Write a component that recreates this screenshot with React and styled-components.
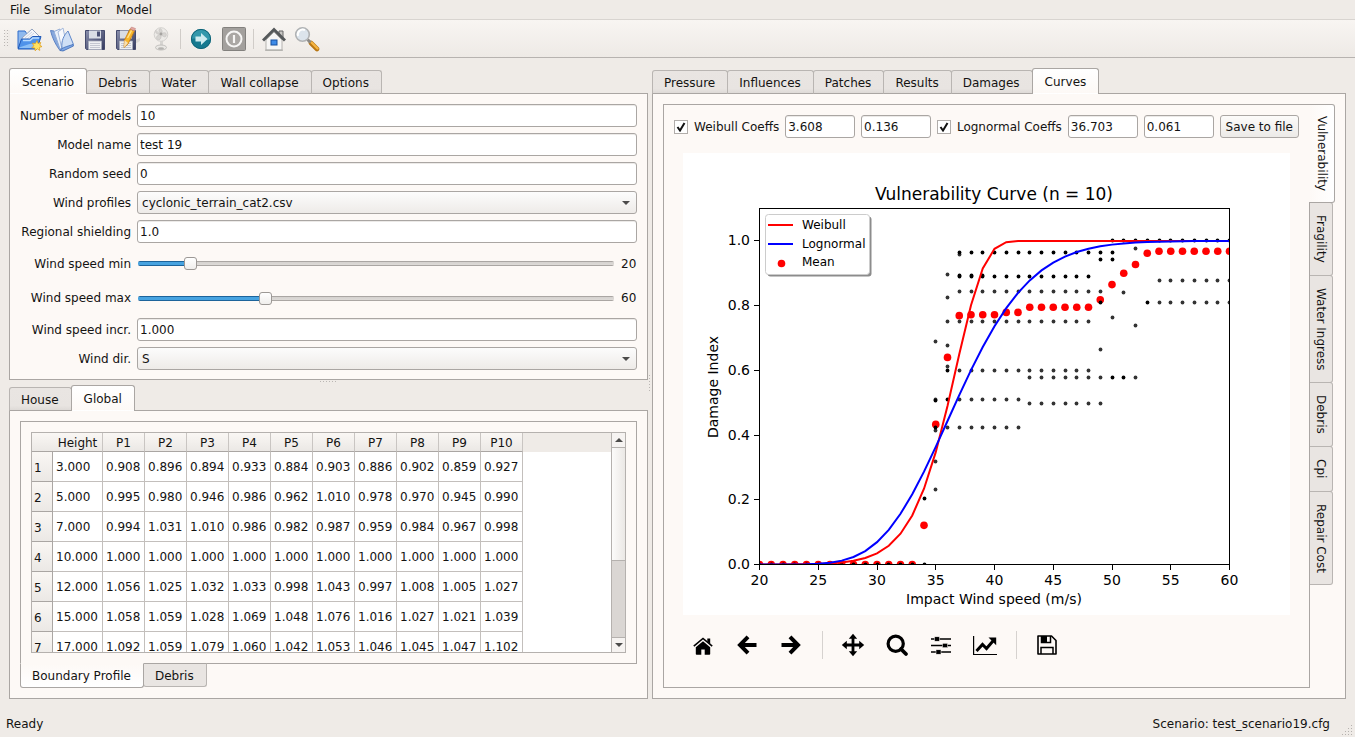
import React, { useState } from 'react';
import styled, { createGlobalStyle, css } from 'styled-components';

const LINE = '#aaa6a3';
const PANEL = '#fdf9f6';
const WINDOW = '#efebe7';

const GlobalStyle = createGlobalStyle`
    *, *::before, *::after {
        box-sizing: border-box;
    }
    body {
        margin: 0;
        background: ${WINDOW};
    }
    body, button, input, select, table {
        font-family: "DejaVu Sans", sans-serif;
        font-size: 12px;
        line-height: 16px;
        color: #141312;
    }
    button, input, select {
        margin: 0;
        outline: none;
    }
`;

const Window = styled.div`
    display: flex;
    flex-direction: column;
    height: 100vh;
    min-height: 620px;
    background: ${WINDOW};
`;

const MenuBar = styled.nav`
    display: flex;
    height: 20px;
    padding: 1px 3px;
    border-bottom: 1px solid #d8d4d0;
`;

const MenuItem = styled.button`
    padding: 0 7px;
    border: none;
    background: none;
`;

const ToolBar = styled.div`
    display: flex;
    align-items: center;
    height: 38px;
    padding-left: 4px;
    background: linear-gradient(#f8f5f2, #eeeae6);
    border-bottom: 1px solid #b7b3b0;
`;

const dots = css`
    background-image: linear-gradient(90deg, transparent 1px, ${WINDOW} 1px), linear-gradient(#bab6b3 1px, transparent 1px);
    background-size: 3px 3px;
`;

const ToolGrip = styled.div`
    width: 6px;
    height: 18px;
    margin-right: 2px;
    ${dots}
`;

const ToolButton = styled.button`
    display: flex;
    align-items: center;
    justify-content: center;
    width: 33px;
    height: 32px;
    padding: 0;
    border: none;
    background: none;
`;

const ToolSeparator = styled.div`
    width: 1px;
    height: 20px;
    margin: 0 3px;
    background: #d0ccc8;
`;

const Main = styled.main`
    flex: 1;
    display: flex;
    min-height: 0;
    padding: 10px 9px 0;
`;

const LeftSide = styled.div`
    flex: 639 1 0;
    display: flex;
    flex-direction: column;
    min-width: 0;
`;

const RightSide = styled.div`
    flex: 694 1 0;
    display: flex;
    flex-direction: column;
    min-width: 0;
`;

const SplitHandle = styled.div`
    display: flex;
    flex: none;
    align-items: center;
    justify-content: center;
    width: ${p => (p.$vertical ? '4px' : 'auto')};
    height: ${p => (p.$vertical ? 'auto' : '5px')};

    &::after {
        content: '';
        width: ${p => (p.$vertical ? '3px' : '18px')};
        height: ${p => (p.$vertical ? '18px' : '3px')};
        ${dots}
    }
`;

const TabBar = styled.div`
    display: flex;
    align-items: ${p => (p.$bottom ? 'flex-start' : 'flex-end')};
    height: ${p => (p.$bottom ? '25px' : '26px')};
    ${p => (p.$bottom ? 'margin-top: -1px;' : 'margin-bottom: -1px;')}
`;

const Tab = styled.button`
    position: relative;
    height: 24px;
    padding: 1px 12px 0 11px;
    margin-left: -1px;
    white-space: nowrap;
    border: 1px solid #b9b5b2;
    background: linear-gradient(#e9e5e2, #e8e4e1 80%, #dedad7);
    border-bottom-color: ${LINE};
    border-radius: 3px 3px 0 0;

    &:first-child {
        margin-left: 0;
    }

    ${p => p.$bottom && css`
        border-color: ${LINE} #b9b5b2 #b9b5b2;
        background: #e9e5e2;
        border-radius: 0 0 3px 3px;
    `}

    ${p => p.$active && css`
        z-index: 1;
        height: 26px;
        padding: 1px 12px 0;
        border-color: ${LINE};
        background: linear-gradient(#ffffff, ${PANEL});
        ${p.$bottom ? 'border-top-color: transparent;' : 'border-bottom-color: transparent;'}
        ${p.$bottom && 'height: 25px; padding: 1px 12px 0 11px; background: linear-gradient(#fdf9f6, #ffffff) padding-box, #fdf9f6;'}
    `}
`;

const Pane = styled.section`
    flex: ${p => (p.$fill ? '1' : 'none')};
    display: flex;
    flex-direction: column;
    min-height: 0;
    min-width: 0;
    padding: 10px;
    border: 1px solid ${LINE};
    background: ${PANEL};
`;

const Form = styled.form`
    display: grid;
    grid-template-columns: auto 1fr;
    gap: 6px;
    align-items: center;
    margin-bottom: -1px;
`;

const FormLabel = styled.label`
    text-align: right;
    white-space: nowrap;
`;

const TextBox = styled.input`
    width: 100%;
    min-width: 0;
    height: 23px;
    padding: 0 3px 0 2px;
    border: 1px solid ${LINE};
    border-radius: 3px;
    background: #ffffff;
    box-shadow: inset 0 1px 0 #eceae8;
`;

const SelectWrap = styled.div`
    position: relative;
    height: 23px;

    svg {
        position: absolute;
        top: 10px;
        right: 7px;
        pointer-events: none;
    }
`;

const SelectBox = styled.select`
    appearance: none;
    display: block;
    width: 100%;
    height: 23px;
    padding: 0 20px 0 4px;
    border: 1px solid ${LINE};
    border-radius: 3px;
    background: linear-gradient(#fcfcfc, #eeebe8);
`;

const SliderRow = styled.div`
    display: flex;
    align-items: center;
    gap: 6px;
    height: ${p => p.$height};
`;

const SliderValue = styled.output`
    width: 16px;
`;

const Slider = styled.input`
    appearance: none;
    flex: 1;
    min-width: 0;
    height: 13px;
    margin: 0 1px;
    background: none;

    &::-webkit-slider-runnable-track {
        height: 5px;
        border-radius: 2px;
        background:
            linear-gradient(#1d649b, #1d649b) 0 0 / var(--fill) 1px no-repeat,
            linear-gradient(#1d649b, #1d649b) 0 100% / var(--fill) 1px no-repeat,
            linear-gradient(#47a3e0, #47a3e0) 0 0 / var(--fill) 100% no-repeat,
            linear-gradient(${LINE} 1px, #d5d2cf 1px, #dddad7 4px, ${LINE} 4px);
    }

    &::-webkit-slider-thumb {
        appearance: none;
        width: 13px;
        height: 13px;
        margin-top: -4px;
        border: 1px solid #9c9895;
        border-radius: 3px;
        background: linear-gradient(#ffffff, #f0eeec);
    }
`;

const TableFrame = styled.div`
    flex: 1;
    display: flex;
    min-height: 0;
    border: 1px solid #b5b1ae;
    background: #ffffff;
`;

const TableView = styled.div`
    flex: 1;
    min-width: 0;
    overflow: hidden;
    background: linear-gradient(${WINDOW}, ${WINDOW}) 0 0 / 100% 19px no-repeat;
`;

const ProfileTable = styled.table`
    width: 491px;
    table-layout: fixed;
    border-collapse: separate;
    border-spacing: 0;
`;

const HeadCell = styled.th`
    width: ${p => p.$width || '42px'};
    height: 19px;
    padding: 2px 0 0;
    font-weight: normal;
    border-bottom: 1px solid ${LINE};
    border-right: ${p => (p.$corner ? 'none' : '1px solid #c9c5c2')};
    background: linear-gradient(#faf7f4, #ebe8e5);
`;

const RowHead = styled.th`
    height: 30px;
    padding: 2px 2px 0;
    font-weight: normal;
    text-align: left;
    border-right: 1px solid ${LINE};
    border-bottom: 1px solid ${LINE};
    background: linear-gradient(#faf7f4, #ebe8e5);
`;

const Cell = styled.td`
    height: 30px;
    padding: 0 3px;
    border-right: 1px solid #c3bfbc;
    border-bottom: 1px solid #c3bfbc;
`;

const ScrollBar = styled.div`
    display: flex;
    flex-direction: column;
    width: 14px;
    border-left: 1px solid #b5b1ae;
    background: #dad6d3;
`;

const ScrollButton = styled.button`
    display: flex;
    align-items: center;
    justify-content: center;
    height: 14px;
    padding: 0;
    border: none;
    background: #f6f3f1;
`;

const ScrollTrack = styled.div`
    flex: 1;
    border: solid #b5b1ae;
    border-width: 1px 0;
`;

const ScrollThumb = styled.div`
    height: 60%;
    border-bottom: 1px solid #b5b1ae;
    background: linear-gradient(90deg, #fcfbfa, #ebe8e5);
`;

const CurvesLayout = styled.div`
    flex: 1;
    display: flex;
    min-height: 0;
`;

const SideTabs = styled.div`
    display: flex;
    flex-direction: column;
    align-items: flex-start;
    width: 25px;
`;

const SideTab = styled.button`
    writing-mode: vertical-rl;
    width: 23px;
    padding: 12px 0;
    margin-bottom: -1px;
    line-height: 20px;
    white-space: nowrap;
    border: 1px solid #b9b5b2;
    border-left: none;
    border-radius: 0 3px 3px 0;
    background: #e9e5e2;

    ${p => p.$active && css`
        position: relative;
        z-index: 1;
        width: 26px;
        padding: 11px 0;
        margin-left: -1px;
        border-color: ${LINE};
        background: linear-gradient(90deg, ${PANEL}, #ffffff);
    `}
`;

const CoeffRow = styled.div`
    display: flex;
    align-items: center;
    gap: 6px;
    margin-bottom: 15px;
`;

const CoeffCheck = styled.label`
    display: flex;
    align-items: center;
    gap: 6px;
    white-space: nowrap;
`;

const CheckWrap = styled.span`
    position: relative;
    display: flex;

    svg {
        position: absolute;
        top: 2px;
        left: 2px;
        pointer-events: none;
    }
`;

const CheckBox = styled.input`
    appearance: none;
    width: 14px;
    height: 14px;
    border: 1px solid #b1adaa;
    background: #ffffff;

    &:not(:checked) + svg {
        display: none;
    }
`;

const SaveButton = styled.button`
    flex: none;
    height: 23px;
    padding: 0 5px;
    border: 1px solid ${LINE};
    border-radius: 3px;
    background: linear-gradient(#fcfbfa, #eceae7);
`;

const Figure = styled.div`
    flex: 1;
    min-height: 0;
    margin: 0 9px;
    background: #ffffff;

    svg {
        display: block;
        width: 100%;
        height: 100%;
    }
`;

const FigureTools = styled.div`
    display: flex;
    align-items: center;
    gap: 6px;
    height: 62px;
    padding: 0 10px 2px;
`;

const FigureButton = styled.button`
    display: flex;
    justify-content: center;
    width: 38px;
    padding: 0;
    border: none;
    background: none;
`;

const FigureSeparator = styled.div`
    width: 1px;
    height: 28px;
    margin: 0 5px 0 6px;
    background: #d6d2cf;
`;

const StatusBar = styled.footer`
    position: relative;
    display: flex;
    align-items: center;
    justify-content: space-between;
    height: 38px;
    padding: 11px 25px 0 6px;
`;

const SizeGrip = styled.svg`
    position: absolute;
    right: 2px;
    bottom: 1px;
`;

/* ---------- toolbar icons ---------- */

const NewFolderIcon = () => (
    <svg width="26" height="26" viewBox="0 0 26 26">
        <path d="M2 5h7l2 3h9v14H2z" fill="#8fb9ee" stroke="#2f6ccb" />
        <path d="M6 12 16 3l7 7-5 8H6z" fill="#f4f6fb" stroke="#93a3bf" />
        <path d="M9 12l7-6M11 13l7-6" stroke="#cdd5e4" />
        <path d="M5.500 13h8l3-2.500h8.500l-4 12.500H2z" fill="#4f93ea" stroke="#1f58b8" />
        <path d="M7 14.500h7l3-2.500h6" fill="none" stroke="#b9dcff" strokeWidth="1.400" />
        <path d="M4.500 21l9-3 9-1-1.500 5H3z" fill="#8cc0f7" />
        <path d="M21 14.500l1 3 2.800-1-1 2.700 2.200 1.400-2.600.8.400 3-2.600-1.600-2 2-.4-2.800-3-.2 2-2-1.400-2.600 3 .4z" fill="#ffe262" stroke="#dd9a12" strokeWidth=".7" />
    </svg>
);

const OpenIcon = () => (
    <svg width="26" height="26" viewBox="0 0 26 26">
        <path d="M1.500 4.500 5 5l9 17-3 2.500C6 18 3 11 1.500 4.500z" fill="#86a8de" stroke="#5d83c4" />
        <path d="M5 5.500 11 3l4 18-4 2z" fill="#e9f0fa" stroke="#93acd6" />
        <path d="M9 6l5-4 4 19-5 2z" fill="#f7f9fd" stroke="#a5b9dc" />
        <path d="M13 22c-1-7 2-13 6-17l5.500 13.500L14 24.500z" fill="#cfdff5" stroke="#6088ca" />
        <path d="M11 24.500c2-3 7-4 13-6l.5 1.500L14 25z" fill="#7ea6e4" stroke="#3e6bb5" strokeWidth=".8" />
    </svg>
);

const FloppyShape = ({ id }) => (
    <g>
        <linearGradient id={id} x1="0" y1="0" x2="1" y2="1">
            <stop offset="0" stopColor="#8b90ad" />
            <stop offset="1" stopColor="#343a5e" />
        </linearGradient>
        <path d="M2.500 3.500h19v19h-18l-1-1z" fill={`url(#${id})`} stroke="#454b6e" />
        <path d="M6 3.500h12v8H6z" fill="#d9dde6" />
        <path d="M14 4.500h3v5h-3z" fill="#4a5176" />
        <path d="M5.500 14h13v8.500h-13z" fill="#eef0f3" stroke="#a7acbb" strokeWidth=".8" />
        <path d="M7 16.500h10M7 18.500h10M7 20.500h10" stroke="#b9bdc8" strokeWidth=".8" />
    </g>
);

const SaveIcon = () => (
    <svg width="24" height="24" viewBox="0 0 24 24"><FloppyShape id="floppy" /></svg>
);

const SaveAsIcon = () => (
    <svg width="28" height="26" viewBox="0 0 28 26">
        <path d="M21 14l5-2v3l-5 3z" fill="#dddad7" />
        <g transform="translate(0 1)"><FloppyShape id="floppyAs" /></g>
        <path d="M10.500 14 16 3l4.500 2L14 18l-4 3.500z" fill="#f8b62c" stroke="#c9780d" strokeWidth=".8" />
        <path d="M16 3l4.500 2 1-2.500L17.500 1z" fill="#e2a79f" stroke="#b77" strokeWidth=".5" />
        <path d="M10.500 14l3.500 3-4 4.500z" fill="#f6dfb4" />
        <path d="M13.500 12 17.500 4.500" stroke="#ffe28c" strokeWidth="1.400" />
    </svg>
);

const FanIcon = () => (
    <svg width="22" height="26" viewBox="0 0 22 26">
        <path d="M10 14h3v7h-3z" fill="#d6d4d1" />
        <circle cx="11" cy="8.500" r="6.800" fill="#eceae7" stroke="#d3d1ce" />
        <path d="M11 8c-4-4-1-6 0-5s2 3 0 5c5-3 6 0 5 2s-4 0-5-2c1 5-2 7-4 5s1-4 4-5c-5 1-6-2-5-4" fill="#d6d4d1" stroke="#c2c0bd" strokeWidth=".6" />
        <circle cx="11" cy="8" r="1.400" fill="#a5a3a0" />
        <ellipse cx="11" cy="21.500" rx="5.500" ry="2.500" fill="#eae8e5" stroke="#c2c0bd" />
        <ellipse cx="11" cy="22.500" rx="3" ry="1.200" fill="#b5b3b0" />
    </svg>
);

const RunIcon = () => (
    <svg width="24" height="24" viewBox="0 0 24 24">
        <circle cx="12" cy="12" r="10" fill="#16798f" />
        <path d="M2.500 12a9.500 9.500 0 0 1 19 0c-5 3-14-2-19 0z" fill="#3398ab" />
        <circle cx="12" cy="12" r="9.600" fill="none" stroke="#0e6478" />
        <path d="M6.500 9.500h5.500V6l6.500 6-6.500 6v-3.500H6.500z" fill="#cdebef" />
    </svg>
);

const PowerIcon = () => (
    <svg width="24" height="24" viewBox="0 0 24 24">
        <rect x=".5" y=".5" width="23" height="23" rx="1" fill="#a3a09d" stroke="#83817e" />
        <circle cx="12" cy="12" r="7.500" fill="#aaa7a4" stroke="#f7f6f5" strokeWidth="2" />
        <path d="M12 8v8" stroke="#f7f6f5" strokeWidth="2.200" />
    </svg>
);

const HouseIcon = () => (
    <svg width="24" height="24" viewBox="0 0 24 24">
        <path d="M17 4h4v8h-4z" fill="#c9c7c4" stroke="#666" />
        <path d="M4 13 12 5l8 8v10H4z" fill="#f7f6f5" stroke="#b5b3b0" />
        <path d="M1 13.500 12 2.500l11 11" fill="none" stroke="#55585a" strokeWidth="3" />
        <path d="M3 23.200h18" stroke="#a9a7a4" />
        <rect x="9" y="13" width="6" height="5" fill="#3d8be8" stroke="#174f9e" />
    </svg>
);

const MagnifierIcon = () => (
    <svg width="26" height="26" viewBox="0 0 26 26">
        <path d="M17 17l6 6" stroke="#b87613" strokeWidth="4.600" strokeLinecap="round" />
        <path d="M17.500 16.500l6 6" stroke="#f5b442" strokeWidth="2.400" strokeLinecap="round" />
        <path d="M13.500 13.500l3 3" stroke="#8b8986" strokeWidth="3" />
        <circle cx="8.500" cy="8.500" r="6.800" fill="#dce4ec" stroke="#b0b2b4" strokeWidth="1.600" />
        <path d="M4 10a5 5 0 0 1 7-6" fill="none" stroke="#ffffff" strokeWidth="2" />
    </svg>
);

/* ---------- figure toolbar icons ---------- */

const FigureIcon = ({ children }) => (
    <svg width="24" height="24" viewBox="0 0 24 24" fill="#000">{children}</svg>
);

const figureIcons = {
    home: (
        <>
            <path d="M12 8.200 4.800 14.300V21c0 .5.3.800.8.800h4.700v-5.200h3.400v5.200h4.700c.5 0 .8-.3.8-.8v-6.700z" />
            <path d="M2.800 13.200 12 5.500l9.200 7.700" fill="none" stroke="#000" strokeWidth="1.600" />
            <path d="M16.300 5.500h2.900v5.500l-2.900-2.400z" />
        </>
    ),
    back: <path d="M13 3.800 5 12l8 8.200M5.500 12H21.500" fill="none" stroke="#000" strokeWidth="4" />,
    forward: <path d="M11 3.800 19 12l-8 8.200M18.500 12H2.500" fill="none" stroke="#000" strokeWidth="4" />,
    pan: (
        <>
            <path d="M12 4v16M4 12h16" stroke="#000" strokeWidth="2.800" />
            <path d="M12 .800l4.200 5H7.800zM12 23.200l4.200-5H7.800zM.800 12l5-4.200v8.400zM23.200 12l-5-4.200v8.400z" />
        </>
    ),
    zoom: (
        <>
            <circle cx="10.700" cy="10.700" r="7.600" fill="none" stroke="#000" strokeWidth="3.200" />
            <path d="M16 16 21 21" stroke="#000" strokeWidth="3.800" strokeLinecap="round" />
        </>
    ),
    sliders: (
        <>
            <path d="M2 6h20M2 12.500h20M2 19h20" stroke="#000" strokeWidth="1.700" />
            <rect x="5.500" y="3.800" width="5" height="4.400" stroke={PANEL} strokeWidth=".5" />
            <rect x="13.500" y="10.300" width="5" height="4.400" stroke={PANEL} strokeWidth=".5" />
            <rect x="7" y="16.800" width="5" height="4.400" stroke={PANEL} strokeWidth=".5" />
        </>
    ),
    chart: (
        <>
            <path d="M.600 3v18.500H24" fill="none" stroke="#000" strokeWidth="1.200" />
            <path d="M3.500 18 9.500 11.500l4 4L20 8" fill="none" stroke="#000" strokeWidth="3" />
            <path d="M15.500 4.500h7.700v7.700z" />
        </>
    ),
    save: (
        <>
            <path d="M3 3h13.500L21 7.500V21H3z" fill="none" stroke="#000" strokeWidth="1.600" strokeLinejoin="round" />
            <path d="M6.500 3v6.500h9V3" fill="none" stroke="#000" strokeWidth="1.500" />
            <path d="M7 3h5v6H7z" />
            <path d="M6 21v-6.500h12V21" fill="none" stroke="#000" strokeWidth="1.500" />
        </>
    ),
};

/* ---------- data ---------- */

const heads = ['Height', 'P1', 'P2', 'P3', 'P4', 'P5', 'P6', 'P7', 'P8', 'P9', 'P10'];
const profile = [
    ['3.000', '0.908', '0.896', '0.894', '0.933', '0.884', '0.903', '0.886', '0.902', '0.859', '0.927'],
    ['5.000', '0.995', '0.980', '0.946', '0.986', '0.962', '1.010', '0.978', '0.970', '0.945', '0.990'],
    ['7.000', '0.994', '1.031', '1.010', '0.986', '0.982', '0.987', '0.959', '0.984', '0.967', '0.998'],
    ['10.000', '1.000', '1.000', '1.000', '1.000', '1.000', '1.000', '1.000', '1.000', '1.000', '1.000'],
    ['12.000', '1.056', '1.025', '1.032', '1.033', '0.998', '1.043', '0.997', '1.008', '1.005', '1.027'],
    ['15.000', '1.058', '1.059', '1.028', '1.069', '1.048', '1.076', '1.016', '1.027', '1.021', '1.039'],
    ['17.000', '1.092', '1.059', '1.079', '1.060', '1.042', '1.053', '1.046', '1.045', '1.047', '1.102'],
];

// [damage index, first speed, last speed, repeated]
const runs = [
    [0, 20, 34, true], [0.205, 34, 34, true],
    [0.233, 35, 35], [0.317, 35, 35], [0.413, 35, 35], [0.422, 35, 35, true], [0.422, 36, 42],
    [0.506, 35, 35, true], [0.511, 35, 35], [0.511, 36, 36, true], [0.511, 37, 42], [0.496, 43, 49],
    [0.579, 43, 49], [0.579, 50, 51, true], [0.579, 52, 52],
    [0.598, 36, 36, true], [0.598, 37, 48], [0.613, 36, 36], [0.663, 49, 49],
    [0.678, 36, 36], [0.688, 35, 35], [0.752, 36, 48], [0.762, 50, 50], [0.74, 52, 52],
    [0.811, 49, 49, true], [0.811, 53, 53, true], [0.811, 54, 60], [0.824, 36, 36],
    [0.845, 37, 49], [0.839, 51, 51], [0.879, 54, 60], [0.895, 36, 36],
    [0.893, 37, 39, true], [0.89, 37, 48, true], [0.944, 49, 50, true],
    [0.963, 37, 50, true], [0.957, 37, 37], [0.978, 52, 52], [1, 50, 60, true],
];

const means = [
    ...Array(14).fill(0),
    0.121, 0.433, 0.64, 0.769, 0.772, 0.772, 0.772, 0.779, 0.779,
    0.795, 0.795, 0.795, 0.795, 0.795, 0.795, 0.818, 0.865, 0.9, 0.927, 0.962,
    ...Array(7).fill(0.968),
];

const speeds = Array.from({ length: 41 }, (_, i) => 20 + i);
const px = v => 76.5 + (v - 20) * 11.75;
const py = v => 411.5 - v * 323.6;

function erf(x) {
    const t = 1 / (1 + 0.3275911 * Math.abs(x));
    const y = 1 - ((((1.061405429 * t - 1.453152027) * t + 1.421413741) * t - 0.284496736) * t + 0.254829592) * t * Math.exp(-x * x);
    return x < 0 ? -y : y;
}

const weibull = v => 1 - Math.exp(-Math.pow(v / 36.89, 16.2));
const lognormal = v => 0.5 * (1 + erf(Math.log(v / 36.703) / (0.136 * Math.SQRT2)));
const curve = fn => speeds.map(v => `${px(v).toFixed(2)},${py(fn(v)).toFixed(2)}`).join(' ');

function VulnerabilityChart({ showWeibull, showLognormal }) {
    return (
        <svg viewBox="0 0 607 462" fontFamily="DejaVu Sans, sans-serif" fontSize="14" fill="#000" role="img" aria-label="Vulnerability Curve">
            <clipPath id="axes"><rect x="76" y="55" width="471" height="357" /></clipPath>
            <text x="311" y="47" fontSize="17" textAnchor="middle">Vulnerability Curve (n = 10)</text>
            <g clipPath="url(#axes)">
                {means.map((m, i) => (
                    <circle key={i} cx={px(20 + i)} cy={py(m)} r="3.800" fill="#ff0000" />
                ))}
                {runs.map(([value, from, to, repeated], i) => (
                    speeds.filter(v => v >= from && v <= to).map(v => (
                        <circle key={`${i}-${v}`} cx={Math.floor(px(v)) + 0.5} cy={Math.floor(py(value)) + 0.5} r="1.900" fillOpacity={repeated ? 1 : 0.8} />
                    ))
                ))}
                {showWeibull && <polyline points={curve(weibull)} fill="none" stroke="#ff0000" strokeWidth="2" />}
                {showLognormal && <polyline points={curve(lognormal)} fill="none" stroke="#0000ff" strokeWidth="2" />}
            </g>
            <rect x="76.500" y="55.500" width="470" height="356" fill="none" stroke="#000" />
            {[20, 25, 30, 35, 40, 45, 50, 55, 60].map(v => (
                <g key={v}>
                    <path d={`M${Math.floor(px(v)) + 0.5} 412v5`} stroke="#000" />
                    <text x={px(v)} y="432" textAnchor="middle">{v}</text>
                </g>
            ))}
            {[0, 0.2, 0.4, 0.6, 0.8, 1].map(v => (
                <g key={v}>
                    <path d={`M71 ${Math.floor(py(v)) + 0.5}h5`} stroke="#000" />
                    <text x="67" y={Math.floor(py(v)) + 5} textAnchor="end">{v.toFixed(1)}</text>
                </g>
            ))}
            <text x="311" y="451" textAnchor="middle">Impact Wind speed (m/s)</text>
            <text transform="translate(35 234) rotate(-90)" textAnchor="middle">Damage Index</text>
            <rect x="84.500" y="63.500" width="104" height="60" rx="3" fill="#8c8c8c" />
            <rect x="82.500" y="61.500" width="104" height="60" rx="3" fill="#fff" stroke="#ccc" />
            <path d="M85 72h25" stroke="#ff0000" strokeWidth="2" />
            <path d="M85 91h25" stroke="#0000ff" strokeWidth="2" />
            <circle cx="98.500" cy="110.500" r="3.800" fill="#ff0000" />
            <g fontSize="12">
                <text x="119" y="76">Weibull</text>
                <text x="119" y="95">Lognormal</text>
                <text x="119" y="113">Mean</text>
            </g>
        </svg>
    );
}

function Tabs({ names, active, bottom }) {
    return (
        <TabBar role="tablist" $bottom={bottom}>
            {names.map(name => (
                <Tab key={name} type="button" role="tab" aria-selected={name === active} $active={name === active} $bottom={bottom}>
                    {name}
                </Tab>
            ))}
        </TabBar>
    );
}

function TextField({ id, label, value }) {
    return (
        <>
            <FormLabel htmlFor={id}>{label}</FormLabel>
            <TextBox id={id} type="text" defaultValue={value} />
        </>
    );
}

function SelectField({ id, label, value }) {
    return (
        <>
            <FormLabel htmlFor={id}>{label}</FormLabel>
            <SelectWrap>
                <SelectBox id={id} defaultValue={value}>
                    <option>{value}</option>
                </SelectBox>
                <svg width="8" height="4" viewBox="0 0 8 4"><path d="M0 0h8L4 4z" fill="#4c4b4a" /></svg>
            </SelectWrap>
        </>
    );
}

function SliderField({ id, label, start, max, height }) {
    const [value, setValue] = useState(start);
    return (
        <>
            <FormLabel htmlFor={id}>{label}</FormLabel>
            <SliderRow $height={height}>
                <Slider
                    id={id}
                    type="range"
                    min="0"
                    max={max}
                    value={value}
                    onChange={e => setValue(Number(e.target.value))}
                    style={{ '--fill': `${(value / max) * 100}%` }}
                />
                <SliderValue htmlFor={id}>{value}</SliderValue>
            </SliderRow>
        </>
    );
}

function ScenarioForm() {
    return (
        <Form>
            <TextField id="models" label="Number of models" value="10" />
            <TextField id="name" label="Model name" value="test 19" />
            <TextField id="seed" label="Random seed" value="0" />
            <SelectField id="profiles" label="Wind profiles" value="cyclonic_terrain_cat2.csv" />
            <TextField id="shielding" label="Regional shielding" value="1.0" />
            <SliderField id="speedMin" label="Wind speed min" start={20} max={200} height="29px" />
            <SliderField id="speedMax" label="Wind speed max" start={60} max={230} height="28px" />
            <TextField id="incr" label="Wind speed incr." value="1.000" />
            <SelectField id="dir" label="Wind dir." value="S" />
        </Form>
    );
}

function BoundaryProfile() {
    return (
        <TableFrame>
            <TableView>
                <ProfileTable>
                    <thead>
                        <tr>
                            <HeadCell $width="21px" $corner />
                            {heads.map((h, i) => <HeadCell key={h} scope="col" $width={i === 0 ? '50px' : '42px'}>{h}</HeadCell>)}
                        </tr>
                    </thead>
                    <tbody>
                        {profile.map((row, i) => (
                            <tr key={row[0]}>
                                <RowHead scope="row">{i + 1}</RowHead>
                                {row.map((v, j) => <Cell key={j}>{v}</Cell>)}
                            </tr>
                        ))}
                    </tbody>
                </ProfileTable>
            </TableView>
            <ScrollBar>
                <ScrollButton type="button" aria-label="Scroll up">
                    <svg width="8" height="4" viewBox="0 0 8 4"><path d="M0 4h8L4 0z" fill="#4c4b4a" /></svg>
                </ScrollButton>
                <ScrollTrack><ScrollThumb /></ScrollTrack>
                <ScrollButton type="button" aria-label="Scroll down">
                    <svg width="8" height="4" viewBox="0 0 8 4"><path d="M0 0h8L4 4z" fill="#4c4b4a" /></svg>
                </ScrollButton>
            </ScrollBar>
        </TableFrame>
    );
}

function CoeffCheckBox({ label, checked, onChange }) {
    return (
        <CoeffCheck>
            <CheckWrap>
                <CheckBox type="checkbox" checked={checked} onChange={e => onChange(e.target.checked)} />
                <svg width="10" height="10" viewBox="0 0 10 10">
                    <path d="M1.500 5 4 8.500 8.500 1" fill="none" stroke="#111" strokeWidth="2" />
                </svg>
            </CheckWrap>
            {label}
        </CoeffCheck>
    );
}

function CurvesPanel() {
    const [showWeibull, setShowWeibull] = useState(true);
    const [showLognormal, setShowLognormal] = useState(true);

    return (
        <CurvesLayout>
            <Pane $fill>
                <CoeffRow>
                    <CoeffCheckBox label="Weibull Coeffs" checked={showWeibull} onChange={setShowWeibull} />
                    <TextBox type="text" aria-label="Weibull coefficient 1" defaultValue="3.608" />
                    <TextBox type="text" aria-label="Weibull coefficient 2" defaultValue="0.136" />
                    <CoeffCheckBox label="Lognormal Coeffs" checked={showLognormal} onChange={setShowLognormal} />
                    <TextBox type="text" aria-label="Lognormal coefficient 1" defaultValue="36.703" />
                    <TextBox type="text" aria-label="Lognormal coefficient 2" defaultValue="0.061" />
                    <SaveButton type="button">Save to file</SaveButton>
                </CoeffRow>
                <Figure>
                    <VulnerabilityChart showWeibull={showWeibull} showLognormal={showLognormal} />
                </Figure>
                <FigureTools>
                    {['home', 'back', 'forward', '|', 'pan', 'zoom', 'sliders', 'chart', '|', 'save'].map((name, i) => (
                        name === '|'
                            ? <FigureSeparator key={i} />
                            : (
                                <FigureButton key={i} type="button" aria-label={name}>
                                    <FigureIcon>{figureIcons[name]}</FigureIcon>
                                </FigureButton>
                            )
                    ))}
                </FigureTools>
            </Pane>
            <SideTabs role="tablist">
                {['Vulnerability', 'Fragility', 'Water Ingress', 'Debris', 'Cpi', 'Repair Cost'].map((name, i) => (
                    <SideTab key={name} type="button" role="tab" aria-selected={i === 0} $active={i === 0}>{name}</SideTab>
                ))}
            </SideTabs>
        </CurvesLayout>
    );
}

function App() {
    return (
        <Window>
            <GlobalStyle />
            <MenuBar>
                <MenuItem type="button">File</MenuItem>
                <MenuItem type="button">Simulator</MenuItem>
                <MenuItem type="button">Model</MenuItem>
            </MenuBar>
            <ToolBar>
                <ToolGrip />
                <ToolButton type="button" aria-label="New"><NewFolderIcon /></ToolButton>
                <ToolButton type="button" aria-label="Open"><OpenIcon /></ToolButton>
                <ToolButton type="button" aria-label="Save"><SaveIcon /></ToolButton>
                <ToolButton type="button" aria-label="Save as"><SaveAsIcon /></ToolButton>
                <ToolButton type="button" aria-label="Fan"><FanIcon /></ToolButton>
                <ToolSeparator />
                <ToolButton type="button" aria-label="Run"><RunIcon /></ToolButton>
                <ToolButton type="button" aria-label="Stop"><PowerIcon /></ToolButton>
                <ToolSeparator />
                <ToolButton type="button" aria-label="House"><HouseIcon /></ToolButton>
                <ToolButton type="button" aria-label="Find"><MagnifierIcon /></ToolButton>
            </ToolBar>
            <Main>
                <LeftSide>
                    <Tabs names={['Scenario', 'Debris', 'Water', 'Wall collapse', 'Options']} active="Scenario" />
                    <Pane><ScenarioForm /></Pane>
                    <SplitHandle />
                    <Tabs names={['House', 'Global']} active="Global" />
                    <Pane $fill>
                        <Pane $fill>
                            <BoundaryProfile />
                        </Pane>
                        <Tabs names={['Boundary Profile', 'Debris']} active="Boundary Profile" bottom />
                    </Pane>
                </LeftSide>
                <SplitHandle $vertical />
                <RightSide>
                    <Tabs names={['Pressure', 'Influences', 'Patches', 'Results', 'Damages', 'Curves']} active="Curves" />
                    <Pane $fill><CurvesPanel /></Pane>
                </RightSide>
            </Main>
            <StatusBar>
                <span>Ready</span>
                <span>Scenario: test_scenario19.cfg</span>
                <SizeGrip width="12" height="12" viewBox="0 0 12 12" fill="#b5b1ae">
                    <path d="M10 1h1v1h-1zM7 4h1v1H7zM10 4h1v1h-1zM4 7h1v1H4zM7 7h1v1H7zM10 7h1v1h-1zM1 10h1v1H1zM4 10h1v1H4zM7 10h1v1H7zM10 10h1v1h-1z" />
                </SizeGrip>
            </StatusBar>
        </Window>
    );
}

export default App;
